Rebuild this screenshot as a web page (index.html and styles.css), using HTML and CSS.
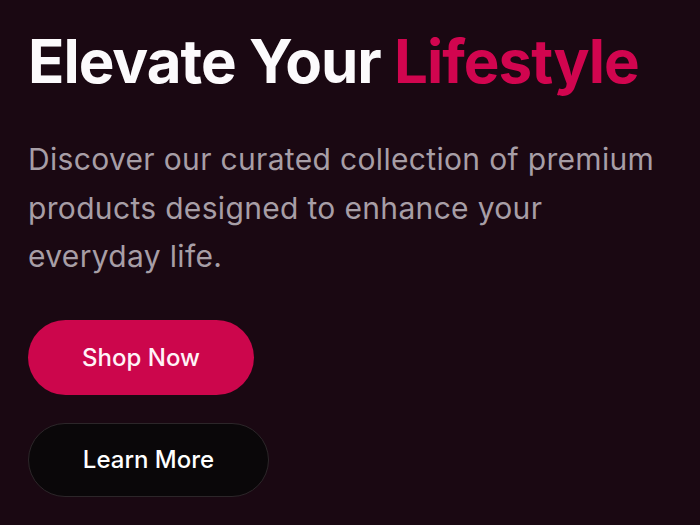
FILE: index.html
```html
<!DOCTYPE html>
<html>
<head>
<meta charset="utf-8">
<link rel="stylesheet" href="styles.css">
</head>
<body>
<section class="hero">
  <h1 class="title">Elevate Your <span class="accent">Lifestyle</span></h1>
  <p class="lead">Discover our curated collection of premium products designed to enhance your everyday life.</p>
  <div class="actions">
    <a class="btn btn-primary">Shop Now</a>
    <a class="btn btn-secondary">Learn More</a>
  </div>
</section>
</body>
</html>
```
FILE: styles.css
```css
html, body {
  margin: 0;
  padding: 0;
  background: #1a0812;
  height: 100%;
}
body {
  font-family: Inter, "Noto Sans", sans-serif;
  color: #ffffff;
}
.hero {
  padding: 28px 28px 0 28px;
  display: flex;
  flex-direction: column;
}
.title {
  margin: 0;
  font-size: 60px;
  line-height: 66px;
  font-weight: 700;
  letter-spacing: -1px;
  color: #fcfafc;
}
.accent {
  color: #d1054f;
}
.lead {
  margin: 41px 0 0 0;
  font-size: 30px;
  line-height: 48.5px;
  letter-spacing: 0.33px;
  color: #a79ea6;
  max-width: 640px;
}
.actions {
  margin-top: 39px;
  display: flex;
  flex-direction: column;
  align-items: flex-start;
  gap: 28px;
}
.btn {
  display: flex;
  align-items: center;
  justify-content: center;
  height: 75px;
  border-radius: 999px;
  font-size: 24px;
  font-weight: 500;
  box-sizing: border-box;
}
.btn-primary {
  width: 226px;
  background: #cc064c;
  color: #fff3f7;
}
.btn-secondary {
  width: 241px;
  height: 74px;
  background: #0a0709;
  border: 1px solid #2c2629;
  color: #ffffff;
}
```
